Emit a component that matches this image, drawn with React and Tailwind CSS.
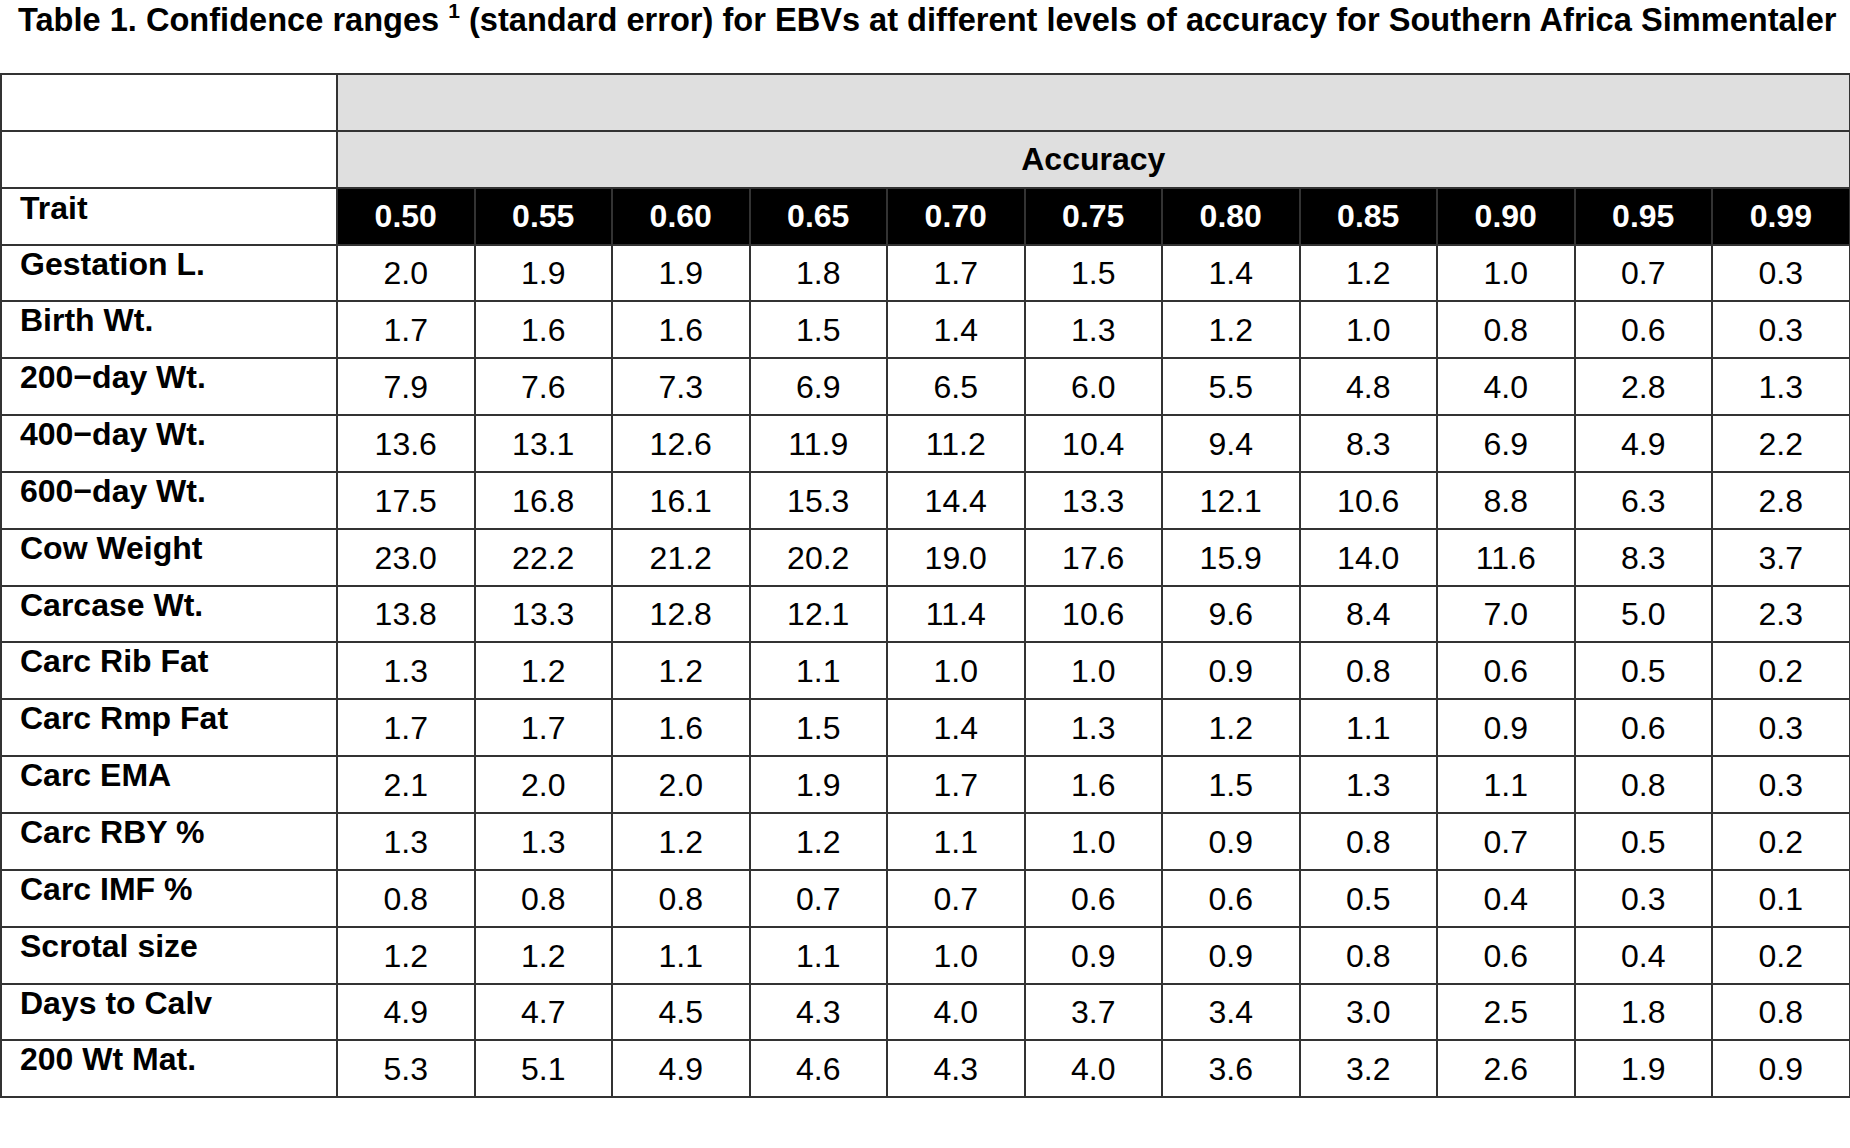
const accuracies = ["0.50", "0.55", "0.60", "0.65", "0.70", "0.75", "0.80", "0.85", "0.90", "0.95", "0.99"];

const rows = [
  ["Gestation L.", ["2.0", "1.9", "1.9", "1.8", "1.7", "1.5", "1.4", "1.2", "1.0", "0.7", "0.3"]],
  ["Birth Wt.", ["1.7", "1.6", "1.6", "1.5", "1.4", "1.3", "1.2", "1.0", "0.8", "0.6", "0.3"]],
  ["200\u2212day Wt.", ["7.9", "7.6", "7.3", "6.9", "6.5", "6.0", "5.5", "4.8", "4.0", "2.8", "1.3"]],
  ["400\u2212day Wt.", ["13.6", "13.1", "12.6", "11.9", "11.2", "10.4", "9.4", "8.3", "6.9", "4.9", "2.2"]],
  ["600\u2212day Wt.", ["17.5", "16.8", "16.1", "15.3", "14.4", "13.3", "12.1", "10.6", "8.8", "6.3", "2.8"]],
  ["Cow Weight", ["23.0", "22.2", "21.2", "20.2", "19.0", "17.6", "15.9", "14.0", "11.6", "8.3", "3.7"]],
  ["Carcase Wt.", ["13.8", "13.3", "12.8", "12.1", "11.4", "10.6", "9.6", "8.4", "7.0", "5.0", "2.3"]],
  ["Carc Rib Fat", ["1.3", "1.2", "1.2", "1.1", "1.0", "1.0", "0.9", "0.8", "0.6", "0.5", "0.2"]],
  ["Carc Rmp Fat", ["1.7", "1.7", "1.6", "1.5", "1.4", "1.3", "1.2", "1.1", "0.9", "0.6", "0.3"]],
  ["Carc EMA", ["2.1", "2.0", "2.0", "1.9", "1.7", "1.6", "1.5", "1.3", "1.1", "0.8", "0.3"]],
  ["Carc RBY %", ["1.3", "1.3", "1.2", "1.2", "1.1", "1.0", "0.9", "0.8", "0.7", "0.5", "0.2"]],
  ["Carc IMF %", ["0.8", "0.8", "0.8", "0.7", "0.7", "0.6", "0.6", "0.5", "0.4", "0.3", "0.1"]],
  ["Scrotal size", ["1.2", "1.2", "1.1", "1.1", "1.0", "0.9", "0.9", "0.8", "0.6", "0.4", "0.2"]],
  ["Days to Calv", ["4.9", "4.7", "4.5", "4.3", "4.0", "3.7", "3.4", "3.0", "2.5", "1.8", "0.8"]],
  ["200 Wt Mat.", ["5.3", "5.1", "4.9", "4.6", "4.3", "4.0", "3.6", "3.2", "2.6", "1.9", "0.9"]],
];

const App = () => {
  return (
    <div className="w-[1850px] min-h-[1148px] bg-white text-black font-['Liberation_Sans',Arial,sans-serif]">

      {/* Caption */}
      <div className="h-[73px] pl-[18px] pt-[1px] text-[32.6px] leading-[37px] font-bold whitespace-nowrap">
        Table 1. Confidence ranges <sup className="text-[21px] relative top-[-13px]">1</sup> (standard error) for EBVs at different levels of accuracy for Southern Africa Simmentaler
      </div>

      {/* Table */}
      <table className="w-[1849px] table-fixed border-collapse text-[32px] leading-[37px]">
        <colgroup>
          <col className="w-[336px]" />
          {accuracies.map((a) => <col key={a} className="w-[137.5px]" />)}
        </colgroup>
        <tbody>
          <tr className="h-[56.85px]">
            <td className="border-2 border-[#333333] bg-white"></td>
            <td colSpan={11} className="border-2 border-[#333333] bg-[#dfdfdf]"></td>
          </tr>
          <tr className="h-[56.85px]">
            <td className="border-2 border-[#333333] bg-white"></td>
            <td colSpan={11} className="border-2 border-[#333333] bg-[#dfdfdf] align-bottom text-center font-bold pb-[9px]">Accuracy</td>
          </tr>
          <tr className="h-[56.85px]">
            <td className="border-2 border-[#333333] bg-white align-top font-bold pl-[18px] pt-[1px]">Trait</td>
            {accuracies.map((a) => (
              <td key={a} className="border-2 border-[#333333] bg-black text-white font-bold text-center align-bottom pb-[9px]">{a}</td>
            ))}
          </tr>
          {rows.map(([trait, values]) => (
            <tr key={trait} className="h-[56.85px]">
              <td className="border-2 border-[#333333] align-top font-bold pl-[18px] pt-[0px] whitespace-nowrap">{trait}</td>
              {values.map((v, i) => (
                <td key={i} className="border-2 border-[#333333] text-center align-bottom pb-[8px]">{v}</td>
              ))}
            </tr>
          ))}
        </tbody>
      </table>

    </div>
  )
}

export default App
